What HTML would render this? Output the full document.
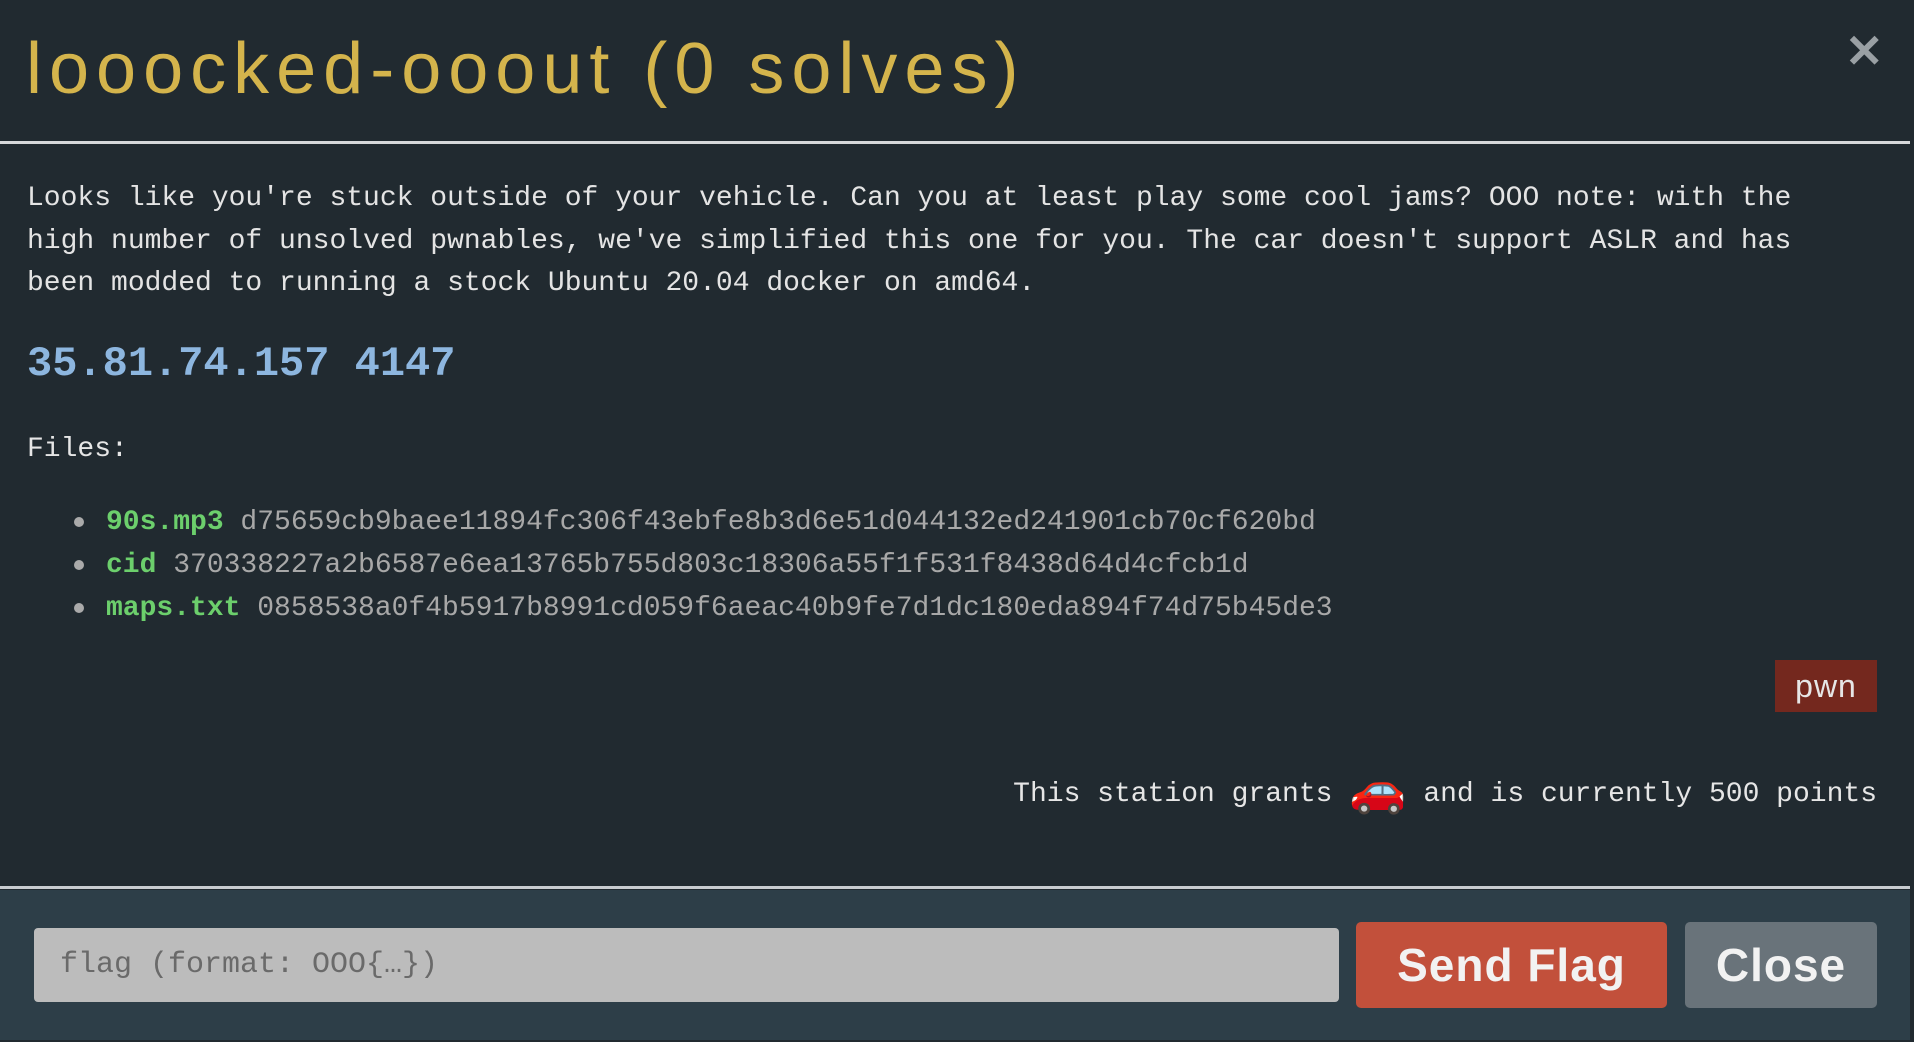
<!DOCTYPE html>
<html><head><meta charset="utf-8"><style>
*{margin:0;padding:0;box-sizing:border-box}
body{width:1914px;height:1042px;background:#212a30;overflow:hidden;position:relative;font-family:"Liberation Mono",monospace;color:#e6e6e6}
.a{position:absolute;white-space:nowrap}
#title{left:26px;top:24px;font-family:"Liberation Sans",sans-serif;font-size:72px;color:#d4b44c;letter-spacing:7px;line-height:90px}
#x{left:1845px;top:24px;font-family:"Liberation Sans",sans-serif;font-size:46px;font-weight:bold;color:#9aa0a4}
.hr{position:absolute;left:0;width:1910px;height:3px;background:#d6d8da}
#desc{left:27px;top:178px;font-size:28px;line-height:42.7px;color:#e4e4e4}
#ip{left:27px;top:340px;font-size:42px;font-weight:bold;color:#8db6df}
#files{left:27px;top:434px;font-size:28px}
.li{left:74px;font-size:28px;color:#a8a8a8}
.li b{color:#6ccf6c}
.li .d{display:inline-block;width:10px;height:10px;border-radius:50%;background:#aaa;margin-right:22px;vertical-align:middle}
#pwn{left:1775px;top:660px;width:102px;height:52px;background:#74281e;color:#e6e6e6;font-family:"Liberation Sans",sans-serif;font-size:32px;text-align:center;line-height:52px;letter-spacing:1px}
#grant{right:37px;top:763px;font-size:28px}
#foot{position:absolute;left:0;top:890px;width:1910px;height:150px;background:#2d3e48}
#inp{left:34px;top:928px;width:1305px;height:74px;background:#bcbcbc;border-radius:4px;color:#6a6a6a;font-size:30px;line-height:74px;padding-left:26px}
.btn{top:922px;height:86px;border-radius:5px;color:#f2f2f2;font-family:"Liberation Sans",sans-serif;font-weight:bold;font-size:46px;text-align:center;line-height:86px;letter-spacing:1px}
</style></head><body>
<div class="a" id="title">looocked-ooout (0 solves)</div>
<div class="a" id="x">✕</div>
<div class="hr" style="top:141px"></div>
<div class="a" id="desc">Looks like you're stuck outside of your vehicle. Can you at least play some cool jams? OOO note: with the<br>high number of unsolved pwnables, we've simplified this one for you. The car doesn't support ASLR and has<br>been modded to running a stock Ubuntu 20.04 docker on amd64.</div>
<div class="a" id="ip">35.81.74.157 4147</div>
<div class="a" id="files">Files:</div>
<div class="a li" style="top:507px"><span class="d"></span><b>90s.mp3</b> d75659cb9baee11894fc306f43ebfe8b3d6e51d044132ed241901cb70cf620bd</div>
<div class="a li" style="top:550px"><span class="d"></span><b>cid</b> 370338227a2b6587e6ea13765b755d803c18306a55f1f531f8438d64d4cfcb1d</div>
<div class="a li" style="top:593px"><span class="d"></span><b>maps.txt</b> 0858538a0f4b5917b8991cd059f6aeac40b9fe7d1dc180eda894f74d75b45de3</div>
<div class="a" id="pwn">pwn</div>
<div class="a" id="grant">This station grants <span style="font-size:46px;vertical-align:-4px">🚗</span> and is currently 500 points</div>
<div id="foot"></div>
<div class="hr" style="top:886px;background:#c8ccd0"></div>
<div class="a" id="inp">flag (format: OOO{…})</div>
<div class="a btn" style="left:1356px;width:311px;background:#c2503b">Send Flag</div>
<div class="a btn" style="left:1685px;width:192px;background:#69737a">Close</div>
</body></html>
